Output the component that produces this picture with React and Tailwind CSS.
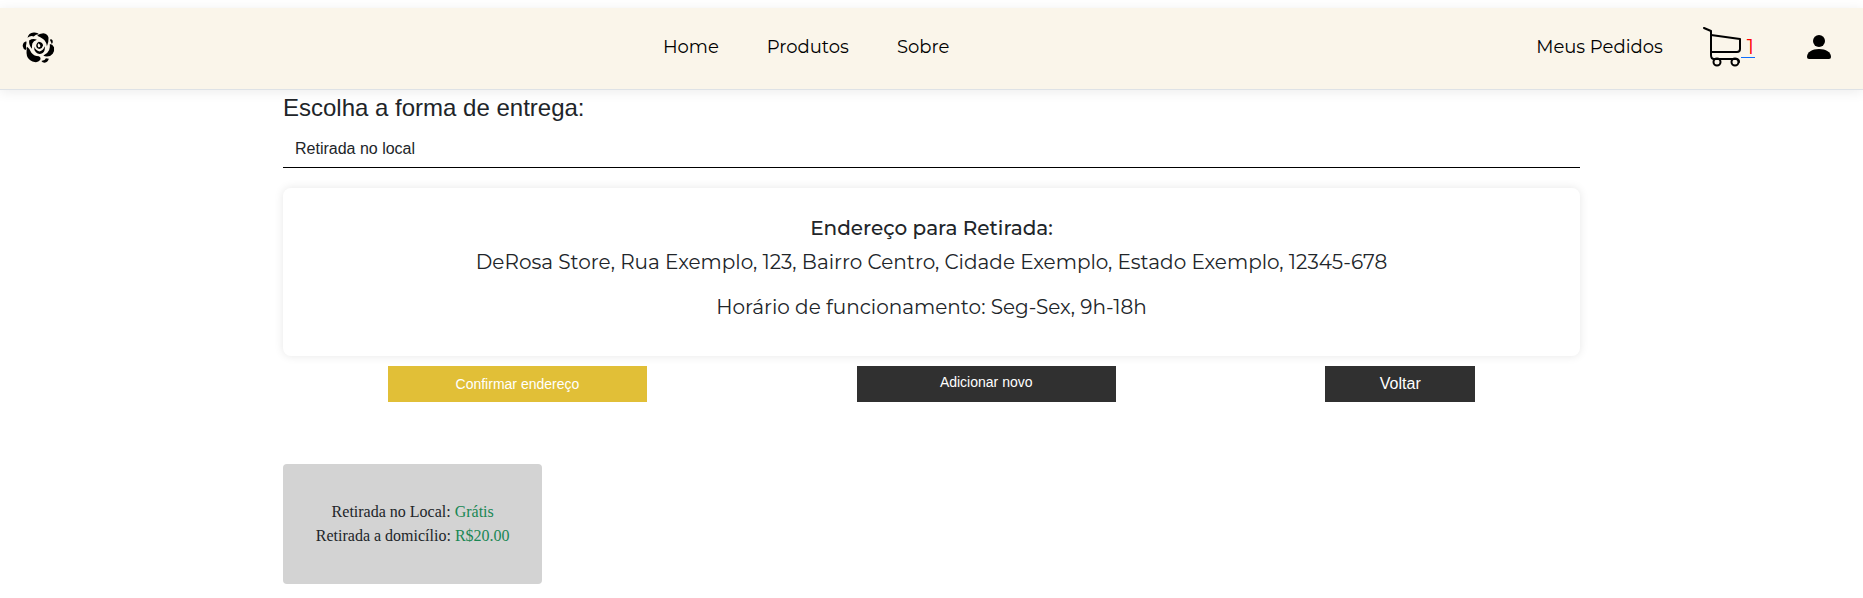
function RoseLogo() {
  return (
    <svg className="h-[33px] w-[33px]" viewBox="66 94 102 98" fill="#000" aria-hidden="true">
      <path d="M79 124 Q69 127 68 138 Q70 148 77 151 L80 146 Q77 136 80 128 Z" />
      <path d="M83 113 Q86 99 102 97 Q113 96 119 102 Q108 102 102 109 Q93 105 83 113 Z" />
      <path d="M113 107 Q119 99 132 99 Q146 101 148 113 Q149 126 143 139 Q141 124 131 117 Q123 112 113 107 Z" />
      <path d="M152 119 Q157 115 161 122 Q162 129 158 132 Q156 126 152 119 Z" />
      <path d="M152 132 Q160 132 165 142 Q167 153 161 162 Q154 171 143 171 Q136 171 132 168 Q145 163 150 151 Q153 141 152 132 Z" />
      <path d="M88 121 Q100 113 112 119 Q101 122 98 131 Q96 139 97 147 Q87 136 88 121 Z" />
      <path d="M82 141 Q90 147 95 159 Q104 170 118 170 Q126 174 122 182 Q116 190 105 188 Q91 186 84 175 Q77 163 82 141 Z" />
      <path d="M126 185 Q137 184 140 176 L149 178 Q146 189 136 190 Q129 190 126 185 Z" />
      <path d="M104 141 Q108 153 120 155 Q132 152 136 139 Q139 152 130 160 Q118 167 109 158 Q102 150 104 141 Z" />
      <path d="M118 125 Q131 127 131 137 Q129 146 120 148 Q109 145 110 135 Q112 128 118 125 Z M117 130 Q112 135 116 142 Q122 144 123 138 Q122 133 117 130 Z" fillRule="evenodd" />
    </svg>
  );
}

function CartIcon() {
  return (
    <svg className="h-10 w-[38px]" viewBox="0 0 38 40" fill="none" stroke="#000" strokeWidth="2" aria-hidden="true">
      <path d="M1 1 L8 4 V28 Q8 32 11 32 H33 Q36 32 36 35" strokeLinejoin="round" strokeLinecap="round" />
      <path d="M8 8 L37 12 V22 Q37 25 34 25 H8" strokeLinejoin="round" />
      <circle cx="14" cy="35" r="3.5" />
      <circle cx="32" cy="35" r="3.5" />
    </svg>
  );
}

function UserIcon() {
  return (
    <svg className="h-6 w-6" viewBox="0 0 24 24" fill="#000" aria-hidden="true">
      <circle cx="12" cy="6" r="6" />
      <path d="M2 24 Q0 24 0 22 C0 17 5 14 12 14 C19 14 24 17 24 22 Q24 24 22 24 Z" />
    </svg>
  );
}

export default function App() {
  return (
    <div className="pt-2 font-['Liberation_Sans',sans-serif] text-base text-[#212529]">
      <header className="flex items-center justify-between border-b border-[#dee2e6] bg-[#faf5ea] pt-[15px] pr-8 pb-[18px] pl-[22px] font-['Montserrat','Inter',sans-serif] text-lg text-black shadow-[0_2px_12px_rgba(0,0,0,0.08)]">
        <a href="#" aria-label="DeRosa Store" className="w-[54px]">
          <RoseLogo />
        </a>
        <nav className="flex gap-12">
          <a href="#">Home</a>
          <a href="#">Produtos</a>
          <a href="#">Sobre</a>
        </nav>
        <div className="flex items-center">
          <a href="#">Meus Pedidos</a>
          <a href="#" aria-label="Carrinho" className="ml-10 flex h-12 items-center text-xl text-[#ff0000]">
            <CartIcon />
            <span className="border-b border-[#0d6efd] pr-px pl-1.5 leading-5">1</span>
          </a>
          <a href="#" aria-label="Minha conta" className="ml-[52px]">
            <UserIcon />
          </a>
        </div>
      </header>

      <main className="mx-auto max-w-[1321px] px-3 pt-1">
        <label htmlFor="entrega" className="block text-2xl leading-7">
          Escolha a forma de entrega:
        </label>
        <select id="entrega" className="mt-2 block h-[38px] w-full appearance-none border-b border-black bg-transparent px-3 text-base">
          <option>Retirada no local</option>
          <option>Entrega a domicílio</option>
        </select>

        <section className="mt-5 rounded-lg bg-white px-5 pt-7 pb-[35px] text-center font-['Montserrat','Inter',sans-serif] text-xl shadow-[0_0_10px_rgba(0,0,0,0.1)]">
          <h2 className="leading-6 font-medium">Endereço para Retirada:</h2>
          <p className="mt-2 leading-7">
            DeRosa Store, Rua Exemplo, 123, Bairro Centro, Cidade Exemplo, Estado Exemplo, 12345-678
          </p>
          <p className="mt-[17px] leading-7">Horário de funcionamento: Seg-Sex, 9h-18h</p>
        </section>

        <div className="mt-2.5 flex justify-around text-white">
          <button type="button" className="h-9 w-1/5 bg-[#e1bf37] text-sm">Confirmar endereço</button>
          <button type="button" className="h-9 w-1/5 bg-[#303030] pb-1 text-sm">Adicionar novo</button>
          <button type="button" className="h-9 w-[150px] bg-[#303030] text-base">Voltar</button>
        </div>

        <aside className="mt-[62px] w-1/5 rounded bg-[#d3d3d3] py-9 text-center font-['Liberation_Serif',serif] leading-6">
          <p>Retirada no Local: <span className="text-[#198754]">Grátis</span></p>
          <p>Retirada a domicílio: <span className="text-[#198754]">R$20.00</span></p>
        </aside>
      </main>
    </div>
  );
}
